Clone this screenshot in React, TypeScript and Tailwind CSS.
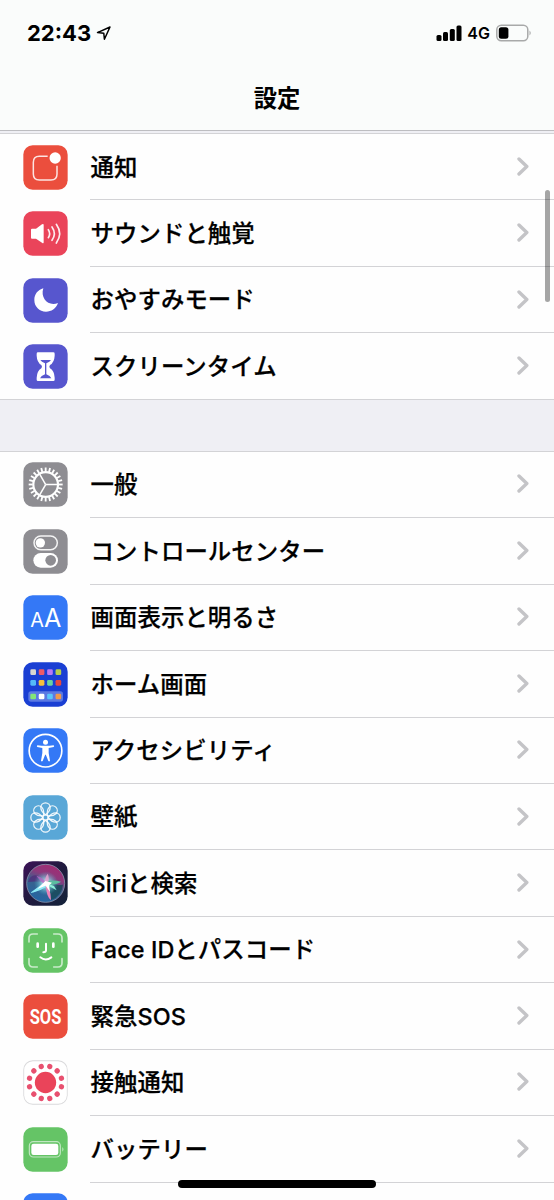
import React from 'react';

interface TileProps {
    bg: string;
    children?: React.ReactNode;
}

interface Setting {
    label: string;
    icon: React.ReactNode;
}

const Tile: React.FC<TileProps> = ({ bg, children }) => (
    <svg className="h-[45px] w-[45px] shrink-0" viewBox="-1 -1 135 135" fill="none">
        <rect width="133" height="133" rx="28" fill={bg} />
        {children}
    </svg>
);

const NotificationIcon = () => (
    <Tile bg="#eb4e3d">
        <path d="M73 33H48Q30 33 30 51V86Q30 104 48 104H83Q101 104 101 86V61" stroke="#fff" strokeOpacity=".85" strokeWidth="4.5" />
        <circle cx="95.5" cy="38" r="17" fill="#fff" />
    </Tile>
);

const SoundIcon = () => (
    <Tile bg="#ea445a">
        <path d="M26 52H38L56 39Q61 36 61 41V93Q61 98 56 94L38 82H26Q23 82 23 79V55Q23 52 26 52Z" fill="#fff" />
        <path d="M75 55Q83 67 75 79M86 47Q100 67 86 87M99 39Q119 67 99 95" stroke="#fff" strokeOpacity=".9" strokeWidth="5" strokeLinecap="round" />
    </Tile>
);

const MoonIcon = () => (
    <Tile bg="#5756ce">
        <path d="M60 30C50 60 76 86 104 74C98 91 84 100 68 100C48 100 33 85 33 65C33 48 43 35 60 30Z" fill="#fff" />
    </Tile>
);

const HourglassIcon = () => (
    <Tile bg="#5756ce">
        <path d="M44 24H90Q94 24 94 28V34Q93 54 80 62Q76 67 80 72Q93 80 94 100V106Q94 110 90 110H44Q40 110 40 106V100Q41 80 54 72Q58 67 54 62Q41 54 40 34V28Q40 24 44 24Z" fill="#fff" />
        <path d="M51 47H83Q80 52 69 57V90Q81 95 84 102H50Q53 95 65 90V57Q54 52 51 47Z" fill="#5756ce" />
    </Tile>
);

const GearIcon = () => (
    <Tile bg="#8e8d92">
        <g transform="translate(67 66.5)" stroke="#fff">
            <circle r="37" strokeWidth="6.5" />
            {Array.from({ length: 24 }, (_, i) => (
                <path key={i} d="M39 0H51" strokeWidth="5.5" transform={`rotate(${i * 15})`} />
            ))}
            {[0, 120, 240].map((a) => (
                <path key={a} d="M0 0H36" strokeWidth="4.5" transform={`rotate(${a})`} />
            ))}
        </g>
    </Tile>
);

const ControlIcon = () => (
    <Tile bg="#8e8d92">
        <rect x="32" y="20" width="70" height="41" rx="20.5" stroke="#fff" strokeOpacity=".9" strokeWidth="4.5" />
        <circle cx="51" cy="40.5" r="14" fill="#fff" />
        <rect x="30" y="71" width="74" height="44" rx="22" fill="#fff" />
        <circle cx="82" cy="93" r="16" fill="#8e8d92" />
    </Tile>
);

const DisplayIcon = () => (
    <Tile bg="#3478f6">
        <g fill="#fff" fontFamily="Inter, sans-serif">
            <text x="21" y="95" fontSize="59" textLength="41" lengthAdjust="spacingAndGlyphs">A</text>
            <text x="62" y="95" fontSize="76" textLength="52" lengthAdjust="spacingAndGlyphs">A</text>
        </g>
    </Tile>
);

const appColors = [
    ['#d9d6d0', '#ee5a68', '#b87af5', '#b5cf4c'],
    ['#54b9f8', '#f6c03c', '#6bd3a0', '#e9493c'],
    ['#83e677', '#ffffff', '#5ac6fa', '#f0994a'],
];
const appRows = [21, 53, 94];

const HomeIcon = () => (
    <Tile bg="#1a3fd3">
        <rect x="15" y="87" width="104" height="31" rx="8" fill="#5b79e2" />
        {appColors.map((row, r) => row.map((c, i) => (
            <rect key={`${r}-${i}`} x={21 + i * 25.2} y={appRows[r]} width="17" height="17" rx="4" fill={c} />
        )))}
    </Tile>
);

const AccessibilityIcon = () => (
    <Tile bg="#3478f6">
        <circle cx="66.5" cy="67" r="49" stroke="#fff" strokeWidth="5" />
        <circle cx="66.5" cy="42" r="7.5" fill="#fff" />
        <path d="M42 51Q66.5 54 91 51Q94 54 91 56L76 59V74L80 97Q78 101 75 98L67.5 79H65.5L58 98Q55 101 53 97L57 74V59L42 56Q39 54 42 51Z" fill="#fff" />
    </Tile>
);

const WallpaperIcon = () => (
    <Tile bg="#59a7d7">
        <g transform="translate(66.5 66.5)" stroke="#fff" strokeWidth="3.8" strokeOpacity=".9">
            {Array.from({ length: 8 }, (_, i) => (
                <path key={i} d="M0 -8C-8 -14 -14 -20 -14 -30A14 14 0 0 1 14 -30C14 -20 8 -14 0 -8Z" transform={`rotate(${i * 45})`} />
            ))}
            <circle r="8" />
        </g>
    </Tile>
);

const SiriIcon = () => (
    <Tile bg="url(#siriBg)">
        <defs>
            <linearGradient id="siriBg" x1="0" y1="0" x2="1" y2="1">
                <stop offset="0" stopColor="#3c1358" />
                <stop offset=".5" stopColor="#201a3e" />
                <stop offset="1" stopColor="#122239" />
            </linearGradient>
            <linearGradient id="siriOrb" x1=".7" y1="0" x2=".3" y2="1">
                <stop offset="0" stopColor="#a32b72" />
                <stop offset=".3" stopColor="#8d397d" />
                <stop offset=".55" stopColor="#39618d" />
                <stop offset="1" stopColor="#2266a5" />
            </linearGradient>
            <radialGradient id="siriGlow">
                <stop offset="0" stopColor="#fff" />
                <stop offset=".3" stopColor="#b8eff6" stopOpacity=".75" />
                <stop offset="1" stopColor="#3ebfd2" stopOpacity="0" />
            </radialGradient>
        </defs>
        <circle cx="67" cy="66" r="57" fill="url(#siriOrb)" stroke="#8790aa" strokeWidth="2.5" />
        <path d="M67 64Q96 74 119 70Q115 104 82 117Q84 88 67 64Z" fill="#174858" fillOpacity=".8" />
        <path d="M67 64Q37 58 14 62Q22 36 45 44Z" fill="#4f307c" fillOpacity=".8" />
        <circle cx="68" cy="66" r="36" fill="url(#siriGlow)" />
        <path d="M69 58Q48 74 20 95Q50 91 77 70Z" fill="#8deaf6" />
        <path d="M64 63Q82 77 83 117Q70 108 67 71Z" fill="#ed82b9" />
        <path d="M67 59Q95 55 113 61Q105 70 70 71Z" fill="#5bbe9f" />
        <path d="M70 69Q63 48 39 43Q50 59 66 72Z" fill="#b36ac5" fillOpacity=".8" />
        <path d="M64 69Q64 47 73 37Q80 50 72 70Z" fill="#e9a2d0" fillOpacity=".85" />
        <path d="M70 66L92 74L100 87L76 74Z" fill="#8df0d8" />
        <path d="M42 83L66 59L86 64L77 72L80 92L67 73Z" fill="#fff" />
    </Tile>
);

const FaceIcon = () => (
    <Tile bg="#65c466">
        <path d="M17 41V29Q17 17 29 17H42M91 17H104Q116 17 116 29V41M116 91V104Q116 116 104 116H91M42 116H29Q17 116 17 104V91" stroke="#fff" strokeOpacity=".65" strokeWidth="5" strokeLinecap="round" />
        <path d="M43 46V55M90 46V55" stroke="#fff" strokeWidth="8" strokeLinecap="round" />
        <path d="M68 46V66Q68 72 60 72M51 87Q67 100 84 87" stroke="#fff" strokeWidth="6" strokeLinecap="round" />
    </Tile>
);

const SosIcon = () => (
    <Tile bg="#eb4e3d">
        <text x="19" y="88" fill="#fff" fontFamily="Roboto, sans-serif" fontSize="61" fontWeight="700" textLength="95" lengthAdjust="spacingAndGlyphs">SOS</text>
    </Tile>
);

const ExposureIcon = () => (
    <Tile bg="#d9d9db">
        <rect x="2.5" y="2.5" width="128" height="128" rx="26" fill="#fff" />
        <circle cx="66.5" cy="66.5" r="32" fill="#ea445a" />
        {Array.from({ length: 12 }, (_, i) => (
            <circle key={i} cx="116" cy="66.5" r="8" fill="#e8506f" transform={`rotate(${i * 30 + 15} 66.5 66.5)`} />
        ))}
    </Tile>
);

const BatteryIcon = () => (
    <Tile bg="#65c466">
        <rect x="18" y="43" width="93" height="46" rx="12" stroke="#fff" strokeOpacity=".6" strokeWidth="3.5" />
        <rect x="24" y="49" width="81" height="34" rx="7" fill="#fff" />
        <path d="M117 59Q124 66 117 73Z" fill="#fff" fillOpacity=".6" />
    </Tile>
);

const alerts: Setting[] = [
    { label: '通知', icon: <NotificationIcon /> },
    { label: 'サウンドと触覚', icon: <SoundIcon /> },
    { label: 'おやすみモード', icon: <MoonIcon /> },
    { label: 'スクリーンタイム', icon: <HourglassIcon /> },
];

const device: Setting[] = [
    { label: '一般', icon: <GearIcon /> },
    { label: 'コントロールセンター', icon: <ControlIcon /> },
    { label: '画面表示と明るさ', icon: <DisplayIcon /> },
    { label: 'ホーム画面', icon: <HomeIcon /> },
    { label: 'アクセシビリティ', icon: <AccessibilityIcon /> },
    { label: '壁紙', icon: <WallpaperIcon /> },
    { label: 'Siriと検索', icon: <SiriIcon /> },
    { label: 'Face IDとパスコード', icon: <FaceIcon /> },
    { label: '緊急SOS', icon: <SosIcon /> },
    { label: '接触通知', icon: <ExposureIcon /> },
    { label: 'バッテリー', icon: <BatteryIcon /> },
    // only the top edge of this row is on screen
    { label: '', icon: <Tile bg="#3478f6" /> },
];

const Row: React.FC<{ item: Setting; last: boolean }> = ({ item, last }) => (
    <li className={`flex items-center pl-[23px] ${last ? 'h-[65.45px]' : 'h-[66.45px]'}`}>
        {item.icon}
        <div className={`ml-[22px] flex h-full flex-1 items-center justify-between pr-[25px] ${last ? '' : 'border-b border-[#d3d3d6]'}`}>
            <span className="pt-px pl-[0.5px] text-[23.4px] leading-none font-medium tracking-[0.08px] whitespace-nowrap [-webkit-text-stroke:0.25px_#000]">{item.label}</span>
            <svg className="h-5 w-3" viewBox="0 0 12 20" fill="none" stroke="#c4c4c7" strokeWidth="3.4" strokeLinecap="round" strokeLinejoin="round">
                <path d="M2 2L9.8 9.5L2 17" />
            </svg>
        </div>
    </li>
);

const Group: React.FC<{ items: Setting[] }> = ({ items }) => (
    <ul className="border-y border-[#d3d3d6] bg-[#fefefe]">
        {items.map((item, i) => <Row key={i} item={item} last={i === items.length - 1} />)}
    </ul>
);

const StatusBar = () => (
    <div className="flex h-[66px] items-center justify-between pr-[22px] pl-[27px]">
        <div className="flex items-center gap-[5px]">
            <span className="text-[22px] leading-none font-bold">22:43</span>
            <svg className="h-4 w-4" viewBox="0 0 16 16" fill="none" stroke="#000" strokeWidth="1.5" strokeLinejoin="round">
                <path d="M1.5 7.6L14 2L8.4 14.3L7.8 8.2Z" />
            </svg>
        </div>
        <div className="flex items-center">
            <svg className="h-4 w-[26px]" viewBox="0 0 26 16">
                <rect x="0.5" y="10" width="5" height="6" rx="1.5" />
                <rect x="7" y="7" width="5" height="9" rx="1.5" />
                <rect x="13.8" y="4" width="5" height="12" rx="1.5" />
                <rect x="20.5" y="0.5" width="5" height="15.5" rx="1.5" />
            </svg>
            <span className="ml-[5px] text-[16px] leading-none font-semibold">4G</span>
            <svg className="ml-1.5 h-[18px] w-[36px]" viewBox="0 0 36 18" fill="none">
                <rect x="0.8" y="1.2" width="31" height="15.6" rx="4.5" stroke="#a8a9a9" strokeWidth="1.5" />
                <rect x="2.8" y="3.2" width="9.6" height="11.6" rx="2.5" fill="#000" />
                <path d="M33.5 6.5Q36 9 33.5 11.5Z" fill="#a8a9a9" />
            </svg>
        </div>
    </div>
);

export default function App() {
    return (
        <div className="relative h-[1200px] w-[554px] overflow-hidden bg-[#efeff4] font-[Inter,'Noto_Sans_CJK_JP',sans-serif] text-black" lang="ja">
            <header className="h-[131px] border-b border-[#bdbdc1] bg-[#fafcfb]">
                <StatusBar />
                <h1 className="flex h-[65px] items-center justify-center pt-px text-[23.3px] leading-none font-bold">設定</h1>
            </header>
            <main className="flex flex-col gap-[51px] pt-[2px]">
                <Group items={alerts} />
                <Group items={device} />
            </main>
            <div className="absolute top-[190px] right-[4px] h-[112px] w-[5px] rounded-full bg-black/35" />
            <div className="absolute top-[1180px] left-[178px] h-2 w-[198px] rounded-full bg-black" />
        </div>
    );
}
